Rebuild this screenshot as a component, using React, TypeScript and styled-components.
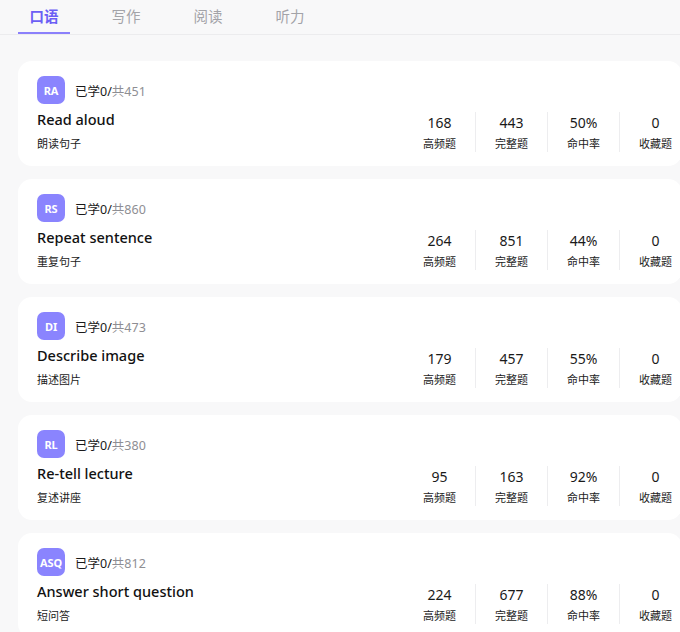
import React from 'react';
import styled, { createGlobalStyle } from 'styled-components';

const GlobalStyle = createGlobalStyle`
    html, body {
        margin: 0;
        padding: 0;
        background: #f8f8f9;
        font-family: "Noto Sans", "Noto Sans CJK SC", sans-serif;
        color: #1a1a1a;
        overflow: hidden;
    }
`;

interface Task {
    code: string;
    total: number;
    title: string;
    subtitle: string;
    frequent: number;
    complete: number;
    hitRate: string;
    saved: number;
}

const tasks: Task[] = [
    { code: 'RA', total: 451, title: 'Read aloud', subtitle: '朗读句子', frequent: 168, complete: 443, hitRate: '50%', saved: 0 },
    { code: 'RS', total: 860, title: 'Repeat sentence', subtitle: '重复句子', frequent: 264, complete: 851, hitRate: '44%', saved: 0 },
    { code: 'DI', total: 473, title: 'Describe image', subtitle: '描述图片', frequent: 179, complete: 457, hitRate: '55%', saved: 0 },
    { code: 'RL', total: 380, title: 'Re-tell lecture', subtitle: '复述讲座', frequent: 95, complete: 163, hitRate: '92%', saved: 0 },
    { code: 'ASQ', total: 812, title: 'Answer short question', subtitle: '短问答', frequent: 224, complete: 677, hitRate: '88%', saved: 0 },
];

const tabs = ['口语', '写作', '阅读', '听力'];

export default function App() {
    return (
        <>
            <GlobalStyle />
            <Page>
                <TabBar>
                    {tabs.map((t, i) => (
                        <Tab key={t} active={i === 0}>
                            {t}
                        </Tab>
                    ))}
                </TabBar>
                <CardList>
                    {tasks.map((task) => (
                        <Card key={task.code}>
                            <Info>
                                <Header>
                                    <Badge>{task.code}</Badge>
                                    <Progress>
                                        已学0/<Muted>共{task.total}</Muted>
                                    </Progress>
                                </Header>
                                <Title>{task.title}</Title>
                                <Subtitle>{task.subtitle}</Subtitle>
                            </Info>
                            <Stats>
                                <Stat>
                                    <StatValue>{task.frequent}</StatValue>
                                    <StatLabel>高频题</StatLabel>
                                </Stat>
                                <Stat>
                                    <StatValue>{task.complete}</StatValue>
                                    <StatLabel>完整题</StatLabel>
                                </Stat>
                                <Stat>
                                    <StatValue>{task.hitRate}</StatValue>
                                    <StatLabel>命中率</StatLabel>
                                </Stat>
                                <Stat>
                                    <StatValue>{task.saved}</StatValue>
                                    <StatLabel>收藏题</StatLabel>
                                </Stat>
                            </Stats>
                        </Card>
                    ))}
                </CardList>
            </Page>
        </>
    );
}

const Page = styled.div`
    width: 680px;
    height: 632px;
    overflow: hidden;
`;

const TabBar = styled.div`
    display: flex;
    gap: 30px;
    padding: 0 18px;
    height: 34px;
    border-bottom: 1px solid #ececee;
`;

const Tab = styled.div<{ active?: boolean }>`
    width: 52px;
    display: flex;
    align-items: center;
    justify-content: center;
    font-size: 14.5px;
    font-weight: ${(props) => (props.active ? 700 : 400)};
    color: ${(props) => (props.active ? '#6c5ff5' : '#a3a3a8')};
    border-bottom: 2px solid ${(props) => (props.active ? '#8b80fb' : 'transparent')};
    padding-bottom: 2px;
    box-sizing: border-box;
`;

const CardList = styled.div`
    display: flex;
    flex-direction: column;
    gap: 13px;
    padding: 26px 0 0 18px;
`;

const Card = styled.div`
    display: flex;
    align-items: flex-end;
    justify-content: space-between;
    height: 105px;
    box-sizing: border-box;
    padding: 15px 0 14px 19px;
    margin-right: -2px;
    background: #ffffff;
    border-radius: 14px;
`;

const Info = styled.div`
    display: flex;
    flex-direction: column;
    align-self: stretch;
`;

const Header = styled.div`
    display: flex;
    align-items: center;
    gap: 10px;
`;

const Badge = styled.div`
    width: 28px;
    height: 28px;
    border-radius: 7px;
    background: #8a84fe;
    color: #ffffff;
    font-size: 11px;
    font-weight: 700;
    display: flex;
    align-items: center;
    justify-content: center;
    letter-spacing: -0.2px;
`;

const Progress = styled.span`
    font-size: 12.5px;
    color: #1a1a1a;
`;

const Muted = styled.span`
    color: #8e8e93;
`;

const Title = styled.div`
    margin-top: 5px;
    font-size: 14.5px;
    font-weight: 500;
    line-height: 20px;
    color: #111;
`;

const Subtitle = styled.div`
    margin-top: 7px;
    font-size: 11px;
    line-height: 16px;
`;

const Stats = styled.div`
    display: flex;
    margin-right: -9px;
`;

const Stat = styled.div`
    width: 71px;
    height: 40px;
    display: flex;
    flex-direction: column;
    align-items: center;
    justify-content: flex-end;
    gap: 4px;
    & + & {
        border-left: 1px solid #ededef;
    }
`;

const StatValue = styled.div`
    font-size: 14px;
    line-height: 18px;
`;

const StatLabel = styled.div`
    font-size: 11px;
    line-height: 16px;
    color: #222;
`;
